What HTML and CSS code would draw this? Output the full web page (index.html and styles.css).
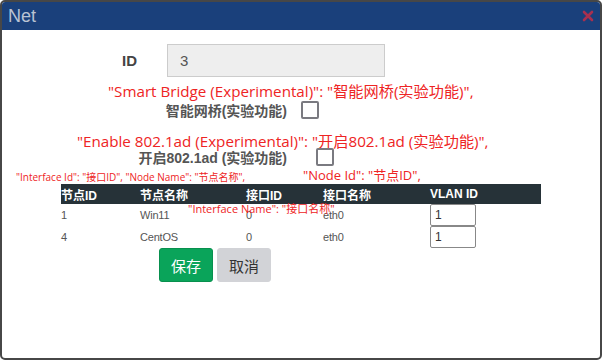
FILE: index.html
```html
<!DOCTYPE html>
<html lang="zh">
<head>
    <meta charset="UTF-8">
    <title>Net</title>
    <link rel="stylesheet" href="styles.css">
</head>
<body>

<div class="window">
    <div class="titlebar">
        <span class="title">Net</span>
        <svg class="close" width="12" height="12" viewBox="0 0 12 12">
            <path d="M2 2 L10 10 M10 2 L2 10" stroke="#a8304f" stroke-width="2.6" stroke-linecap="round"/>
        </svg>
    </div>

    <div class="content">
        <div class="id-row">
            <label class="id-label" for="net-id">ID</label>
            <input class="id-input" id="net-id" type="text" value="3" readonly>
        </div>

        <div class="note note-big note-first">"Smart Bridge (Experimental)": "智能网桥(实验功能)",</div>
        <div class="check-row">
            <span class="check-label">智能网桥(实验功能)</span>
            <span class="checkbox"></span>
        </div>

        <div class="note note-big note-second">"Enable 802.1ad (Experimental)": "开启802.1ad (实验功能)",</div>
        <div class="check-row check-row-tight">
            <span class="check-label">开启802.1ad (实验功能)</span>
            <span class="checkbox checkbox-wide"></span>
        </div>

        <div class="note-row">
            <span class="note note-small">"Interface Id": "接口ID", "Node Name": "节点名称",</span>
            <span class="note note-mid">"Node Id": "节点ID",</span>
        </div>

        <div class="table-wrap">
            <table class="iface-table">
                <thead>
                    <tr>
                        <th class="col-node">节点ID</th>
                        <th class="col-name">节点名称</th>
                        <th class="col-if">接口ID</th>
                        <th class="col-ifname">接口名称</th>
                        <th class="col-vlan">VLAN ID</th>
                    </tr>
                </thead>
                <tbody>
                    <tr>
                        <td>1</td>
                        <td>Win11</td>
                        <td>0</td>
                        <td>eth0</td>
                        <td><input class="vlan-input" type="text" value="1"></td>
                    </tr>
                    <tr>
                        <td>4</td>
                        <td>CentOS</td>
                        <td>0</td>
                        <td>eth0</td>
                        <td><input class="vlan-input" type="text" value="1"></td>
                    </tr>
                </tbody>
            </table>
            <!-- debug string drawn over the first row -->
            <span class="note note-overlay">"Interface Name": "接口名称"</span>
        </div>

        <div class="actions">
            <button class="btn btn-save">保存</button>
            <button class="btn btn-cancel">取消</button>
        </div>
    </div>
</div>

</body>
</html>
```

FILE: styles.css
```css
body {
    margin: 0;
    font-family: "Liberation Sans", Arial, "Noto Sans CJK SC", sans-serif;
    background: #fff;
}
.window {
    width: 602px;
    height: 360px;
    box-sizing: border-box;
    border: 2px solid #474747;
    border-radius: 5px;
    overflow: hidden;
    background: #fff;
}
.titlebar {
    height: 28px;
    background: #1a407b;
    display: flex;
    align-items: center;
    justify-content: space-between;
    padding: 0 6px;
}
.title {
    color: #b9c3d3;
    font-size: 18px;
}
.content {
    position: relative;
}
.id-row {
    display: flex;
    align-items: center;
    margin-top: 14px;
    height: 33px;
}
.id-label {
    width: 135px;
    text-align: right;
    font-weight: bold;
    font-size: 15px;
    color: #444;
}
.id-input {
    margin-left: 30px;
    width: 218px;
    height: 33px;
    box-sizing: border-box;
    background: #eee;
    border: 1px solid #ccc;
    padding: 0 12px;
    font-family: inherit;
    font-size: 15px;
    color: #555;
}
.note {
    color: #ee2424;
    font-family: "Open Sans", "Noto Sans CJK SC", sans-serif;
    white-space: nowrap;
}
.note-big {
    font-size: 15.2px;
    line-height: 18px;
}
.note-first {
    margin: 5px 0 0 106px;
}
.note-second {
    margin: 13px 0 0 75px;
}
.check-row {
    display: flex;
    align-items: center;
    height: 19px;
}
.check-row-tight {
    margin-top: -3px;
}
.check-label {
    width: 285px;
    text-align: right;
    font-weight: bold;
    font-size: 14px;
    color: #555;
    font-family: "Liberation Sans", "Noto Sans CJK SC", sans-serif;
}
.checkbox {
    width: 14px;
    height: 14px;
    border: 2px solid #7a7a80;
    border-radius: 2px;
    margin-left: 14px;
}
.checkbox-wide {
    margin-left: 29px;
}
.note-row {
    display: flex;
    align-items: flex-end;
    height: 18px;
}
.note-small {
    font-size: 10px;
    margin-left: 14px;
}
.note-mid {
    font-size: 13px;
    margin-left: 58px;
}
.table-wrap {
    position: relative;
    margin-left: 59px;
    width: 480px;
}
.iface-table {
    width: 480px;
    border-collapse: collapse;
    font-size: 11px;
    table-layout: fixed;
}
.iface-table th {
    background: #263238;
    color: #fff;
    font-weight: bold;
    font-size: 12px;
    text-align: left;
    height: 20px;
    padding: 0;
}
.iface-table td {
    color: #555;
    height: 22px;
    padding: 0;
    letter-spacing: -0.2px;
}
.col-node { width: 79px; }
.col-name { width: 106px; }
.col-if { width: 77px; }
.col-ifname { width: 107px; }
.col-vlan { width: 111px; }
.vlan-input {
    display: block;
    width: 46px;
    height: 22px;
    box-sizing: border-box;
    border: 1px solid #888;
    border-radius: 2px;
    padding: 0 4px;
    font-family: inherit;
    font-size: 12px;
    color: #333;
}
.note-overlay {
    position: absolute;
    left: 127px;
    top: 16px;
    font-size: 11px;
}
.actions {
    display: flex;
    gap: 4px;
    margin-left: 157px;
}
.btn {
    height: 34px;
    padding: 0 11px;
    border-radius: 3px;
    font-size: 15px;
    font-family: "Noto Sans CJK SC", sans-serif;
    cursor: pointer;
}
.btn-save {
    background: #0aa45a;
    border: 1px solid #08904e;
    color: #fff;
}
.btn-cancel {
    background: #d2d3d7;
    border: 1px solid #d2d3d7;
    color: #333;
}
```
